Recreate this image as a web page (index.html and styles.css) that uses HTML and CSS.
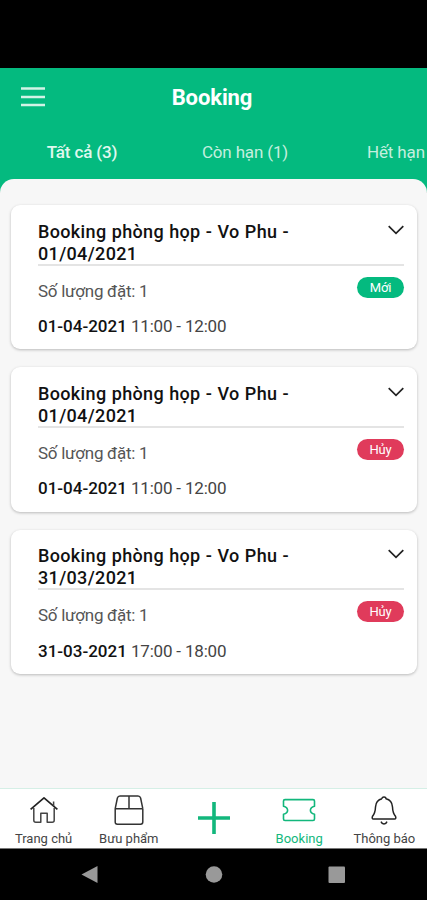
FILE: index.html
```html
<!DOCTYPE html>
<html lang="vi">
<head>
<meta charset="utf-8">
<meta name="viewport" content="width=device-width, initial-scale=1">
<title>Booking</title>
<link rel="stylesheet" href="styles.css">
</head>
<body>
<div class="status-bar"></div>
<header class="header">
  <div class="header-row">
    <svg class="menu" width="24" height="20" viewBox="0 0 24 20"><path d="M0 1.5H24M0 10H24M0 18H24" stroke="#d2f3e6" stroke-width="2.6"/></svg>
    <h1 class="title">Booking</h1>
  </div>
  <nav class="tabs">
    <span class="tab tab-active">Tất cả (3)</span>
    <span class="tab">Còn hạn (1)</span>
    <span class="tab tab-last">Hết hạn</span>
  </nav>
</header>
<main class="content">
  <article class="card">
    <div class="card-head">
      <h2 class="card-title">Booking phòng họp - Vo Phu - 01/04/2021</h2>
      <svg class="chevron" width="16" height="10" viewBox="0 0 16 10"><path d="M.7 1.2 8 8.3 15.3 1.2" fill="none" stroke="#222" stroke-width="1.7"/></svg>
    </div>
    <div class="card-row"><span class="count">Số lượng đặt: 1</span><span class="badge badge-new">Mới</span></div>
    <p class="time"><b>01-04-2021</b> 11:00 - 12:00</p>
  </article>
  <article class="card">
    <div class="card-head">
      <h2 class="card-title">Booking phòng họp - Vo Phu - 01/04/2021</h2>
      <svg class="chevron" width="16" height="10" viewBox="0 0 16 10"><path d="M.7 1.2 8 8.3 15.3 1.2" fill="none" stroke="#222" stroke-width="1.7"/></svg>
    </div>
    <div class="card-row"><span class="count">Số lượng đặt: 1</span><span class="badge badge-cancelled">Hủy</span></div>
    <p class="time"><b>01-04-2021</b> 11:00 - 12:00</p>
  </article>
  <article class="card">
    <div class="card-head">
      <h2 class="card-title">Booking phòng họp - Vo Phu - 31/03/2021</h2>
      <svg class="chevron" width="16" height="10" viewBox="0 0 16 10"><path d="M.7 1.2 8 8.3 15.3 1.2" fill="none" stroke="#222" stroke-width="1.7"/></svg>
    </div>
    <div class="card-row"><span class="count">Số lượng đặt: 1</span><span class="badge badge-cancelled">Hủy</span></div>
    <p class="time"><b>31-03-2021</b> 17:00 - 18:00</p>
  </article>
</main>
<nav class="bottom-nav">
  <a class="nav-item">
    <svg width="34" height="34" viewBox="0 0 34 34" fill="none" stroke="#444" stroke-width="1.5" stroke-linejoin="round"><path d="M3.6 16.4 17 4.8 30.4 16.4" stroke="#222" stroke-width="1.7"/><path d="M26.6 13V8.6M6.8 15V27.3Q6.8 29.3 8.8 29.3H13.8V20.3H20.2V29.3H25.2Q27.2 29.3 27.2 27.3V15"/></svg>
    <span>Trang chủ</span>
  </a>
  <a class="nav-item">
    <svg width="34" height="34" viewBox="0 0 34 34" fill="none" stroke="#333" stroke-width="1.5" stroke-linejoin="round"><path d="M3.2 15.7H30.8V29Q30.8 31.2 28.6 31.2H5.4Q3.2 31.2 3.2 29V15.7L5.4 5Q6 3 8 3H26Q28 3 28.6 5L30.8 15.7M17 3V15.7"/></svg>
    <span>Bưu phẩm</span>
  </a>
  <a class="nav-item nav-add">
    <svg width="34" height="34" viewBox="0 0 34 34"><path d="M17 1V33M1 17H33" stroke="#12b77c" stroke-width="3.6"/></svg>
  </a>
  <a class="nav-item nav-active">
    <svg width="34" height="34" viewBox="0 0 34 34" fill="none" stroke="#12b77c" stroke-width="1.6" stroke-linejoin="round"><path d="M3 6.6H31Q32.5 6.6 32.5 8.1V13.2Q28.4 14.2 28.4 17.3T32.5 21.3V26Q32.5 27.5 31 27.5H3Q1.5 27.5 1.5 26V21.3Q5.6 20.4 5.6 17.3T1.5 13.2V8.1Q1.5 6.6 3 6.6Z"/></svg>
    <span>Booking</span>
  </a>
  <a class="nav-item">
    <svg width="34" height="34" viewBox="0 0 34 34" fill="none" stroke="#222" stroke-width="1.5" stroke-linejoin="round"><path d="M15 5.8Q15 4 17 4T19 5.8Q25 7 25.5 14C25.7 20 27 21.5 28.5 23.3Q29.5 26 27.5 26H6.5Q4.5 26 5.5 23.3C7 21.5 8.3 20 8.5 14Q9 7 15 5.8M14 28.6Q15 31 17 31T20 28.6"/></svg>
    <span>Thông báo</span>
  </a>
</nav>
<div class="system-bar">
  <svg width="427" height="51" viewBox="0 0 427 51" fill="#999"><path d="M81.5 25.5 97.5 17V34Z"/><circle cx="214" cy="25.5" r="8.3"/><rect x="328.5" y="17.5" width="16.5" height="16.5" rx="1"/></svg>
</div>
</body>
</html>
```
FILE: styles.css
```css
* { box-sizing: border-box; }
body {
  margin: 0;
  width: 427px;
  height: 900px;
  overflow: hidden;
  display: flex;
  flex-direction: column;
  background: #000;
  color: #111;
  font-family: Roboto, "Noto Sans", sans-serif;
}
h1, h2, p { margin: 0; }
svg { display: block; flex: none; }
.status-bar { height: 67.5px; flex: none; }
.header { height: 124.5px; flex: none; background: #04ba7f; color: #fff; }
.header-row {
  height: 58.5px;
  display: grid;
  grid-template-columns: 58px 1fr 61px;
  align-items: center;
}
.menu { margin-left: 21px; }
.title { font-size: 22px; line-height: 26px; font-weight: 700; text-align: center; margin-top: 2px; letter-spacing: -.1px; }
.tabs { display: flex; height: 53px; }
.tab {
  flex: 0 0 163px;
  font-size: 17px;
  line-height: 20px;
  padding: 16px 0 0 1px;
  text-align: center;
  white-space: nowrap;
  letter-spacing: -.15px;
  color: #c4efdf;
}
.tab-active { font-weight: 500; color: #e0f8ef; }
.tab-last { flex: 1; padding-left: 41px; text-align: left; }
.content {
  flex: 1;
  min-height: 0;
  margin-top: -13.5px;
  padding: 26.5px 10px 0 11px;
  display: flex;
  flex-direction: column;
  gap: 18px;
  background: #f7f7f7;
  border-radius: 14px 14px 0 0;
}
.card {
  height: 144.3px;
  flex: none;
  padding: 15px 13px 0 27px;
  background: #fff;
  border-radius: 9px;
  box-shadow: 0 1px 3px rgba(0, 0, 0, .25);
}
.card-head {
  height: 45.5px;
  display: flex;
  justify-content: space-between;
  border-bottom: 2px solid #e4e4e4;
}
.card-title {
  width: 270px;
  padding-top: .5px;
  font-size: 18px;
  line-height: 22px;
  font-weight: 500;
  letter-spacing: .35px;
  word-spacing: .4px;
}
.chevron { margin-top: 4.5px; }
.card-row { display: flex; justify-content: space-between; height: 36.5px; padding-top: 11px; }
.count { font-size: 17px; line-height: 28px; color: #555; letter-spacing: -.27px; }
.badge {
  width: 47px;
  height: 21px;
  border-radius: 11px;
  color: #fff;
  font-size: 13px;
  line-height: 22px;
  letter-spacing: -.2px;
  text-align: center;
}
.badge-new { background: #04ba7f; }
.badge-cancelled { background: #e03b5b; }
.time { margin-top: 14px; font-size: 17px; line-height: 20px; color: #444; letter-spacing: -.18px; }
.time b { color: #111; font-weight: 500; letter-spacing: 0; }
.bottom-nav {
  height: 61px;
  flex: none;
  display: grid;
  grid-template-columns: repeat(5, 1fr);
  padding-left: 1px;
  background: #fff;
  border-top: 1px solid #d5efe6;
  border-bottom: 1px solid #777;
}
.nav-item {
  display: flex;
  flex-direction: column;
  align-items: center;
  padding-top: 4px;
  font-size: 13px;
  line-height: 16px;
  color: #444;
  white-space: nowrap;
}
.nav-item span { margin-top: 4px; }
.nav-add { padding-top: 12px; }
.nav-active { color: #12b77c; }
.system-bar { height: 51px; flex: none; }
```
